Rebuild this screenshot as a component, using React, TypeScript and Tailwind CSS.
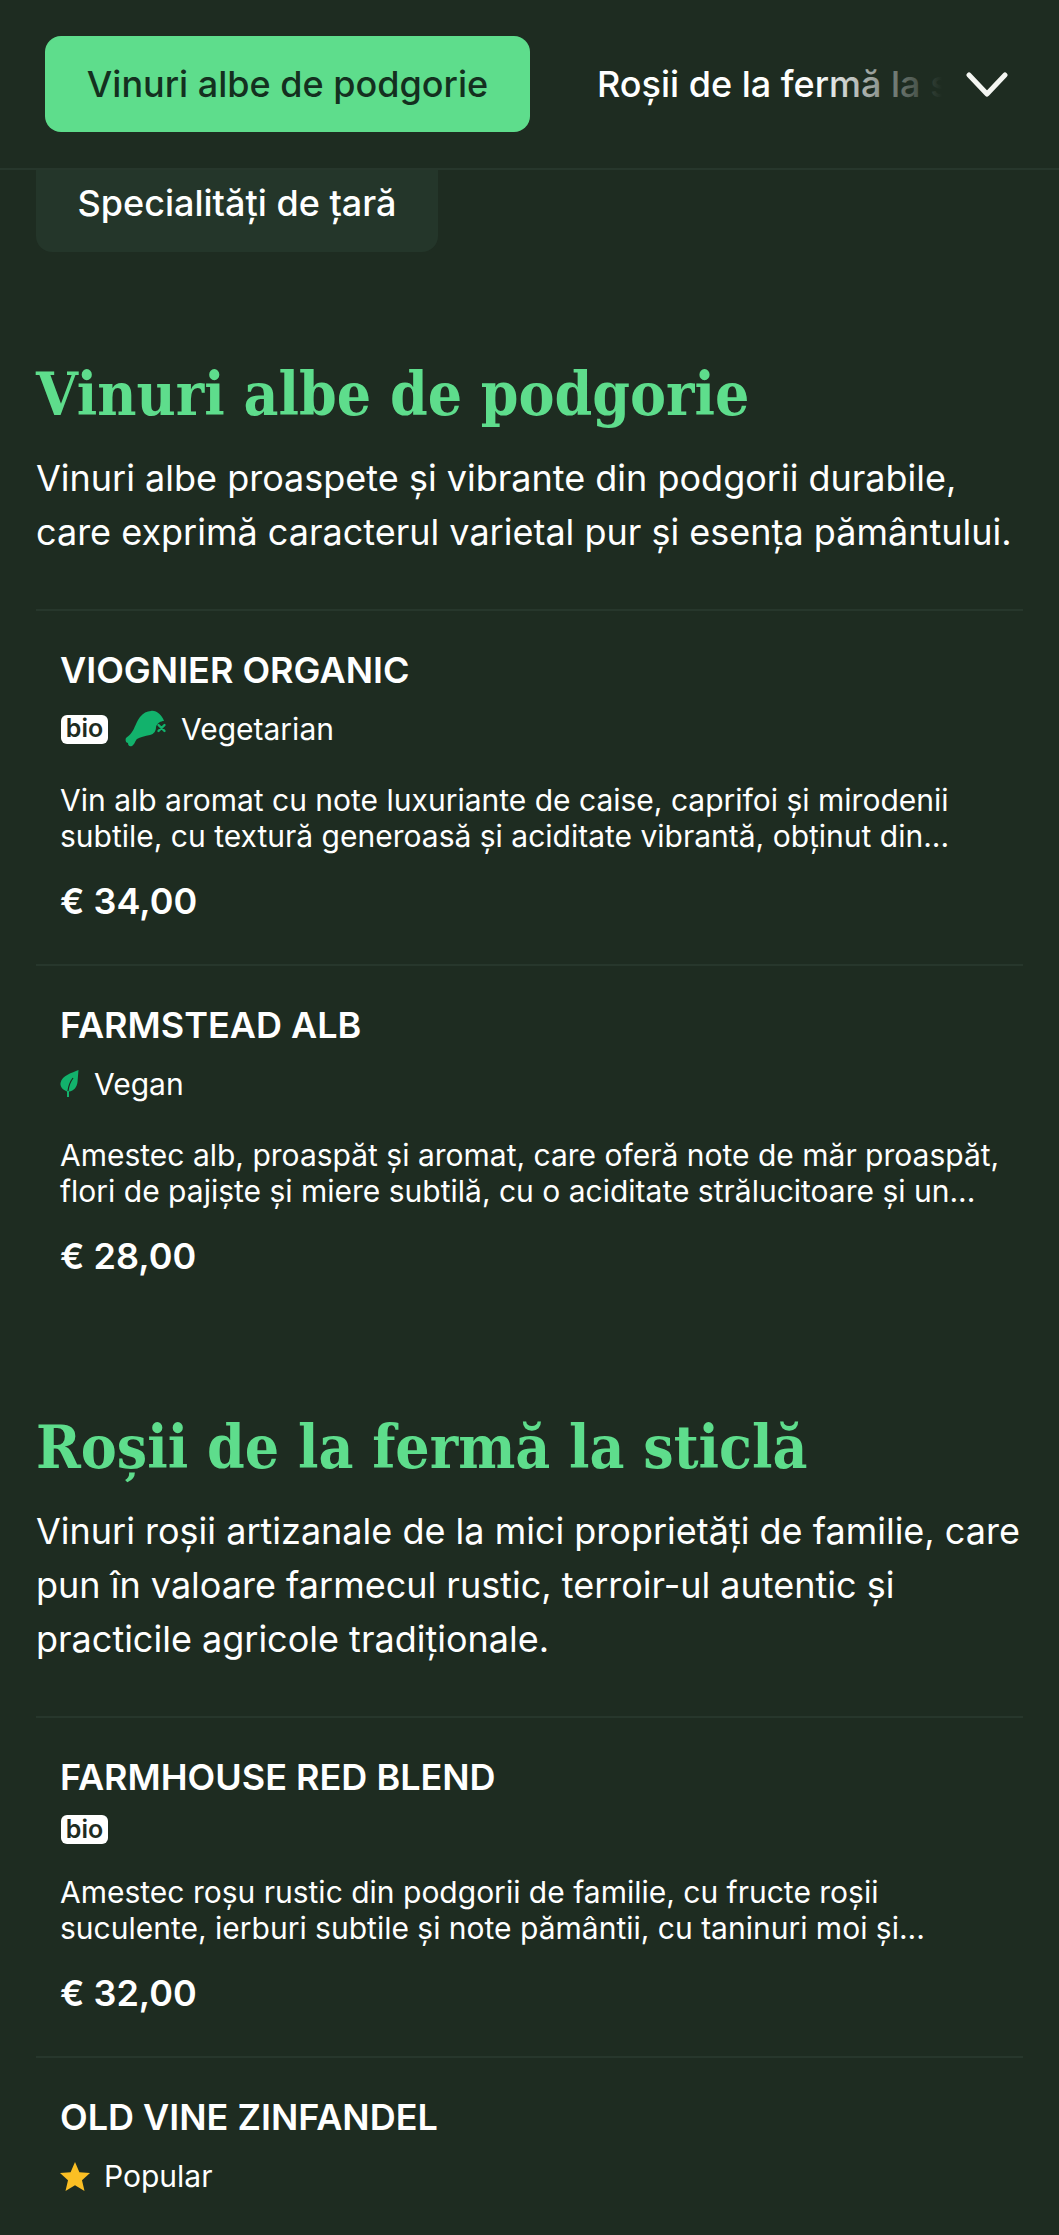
import React from 'react';

type Tag = 'vegetarian' | 'vegan' | 'popular';

interface Dish {
  name: string;
  bio?: boolean;
  tag?: Tag;
  lines: string[];
  price?: string;
}

interface Section {
  title: string;
  intro: string[];
  dishes: Dish[];
}

const SECTIONS: Section[] = [
  {
    title: 'Vinuri albe de podgorie',
    intro: [
      'Vinuri albe proaspete și vibrante din podgorii durabile,',
      'care exprimă caracterul varietal pur și esența pământului.',
    ],
    dishes: [
      {
        name: 'VIOGNIER ORGANIC',
        bio: true,
        tag: 'vegetarian',
        lines: [
          'Vin alb aromat cu note luxuriante de caise, caprifoi și mirodenii',
          'subtile, cu textură generoasă și aciditate vibrantă, obținut din...',
        ],
        price: '€ 34,00',
      },
      {
        name: 'FARMSTEAD ALB',
        tag: 'vegan',
        lines: [
          'Amestec alb, proaspăt și aromat, care oferă note de măr proaspăt,',
          'flori de pajiște și miere subtilă, cu o aciditate strălucitoare și un...',
        ],
        price: '€ 28,00',
      },
    ],
  },
  {
    title: 'Roșii de la fermă la sticlă',
    intro: [
      'Vinuri roșii artizanale de la mici proprietăți de familie, care',
      'pun în valoare farmecul rustic, terroir-ul autentic și',
      'practicile agricole tradiționale.',
    ],
    dishes: [
      {
        name: 'FARMHOUSE RED BLEND',
        bio: true,
        lines: [
          'Amestec roșu rustic din podgorii de familie, cu fructe roșii',
          'suculente, ierburi subtile și note pământii, cu taninuri moi și...',
        ],
        price: '€ 32,00',
      },
      {
        name: 'OLD VINE ZINFANDEL',
        tag: 'popular',
        lines: [],
      },
    ],
  },
];

const DrumstickIcon = () => (
  <svg width="42" height="38" viewBox="0 0 42 38" className="shrink-0">
    <path
      d="M26 1C31 0 37 5 39 11 36 11 32 13 31 17 31 21 29 24 25 25 20 26 15 27 12 29 10 31 10 34 7 36 4 37 3 35 3 33 1 33 0 30 1 28 3 26 5 25 7 22 10 18 11 12 15 7 18 3 22 1 26 1z"
      fill="#12b26c"
    />
    <path d="M33.500 15l6 6M39.500 15l-6 6" stroke="#12b26c" strokeWidth="2.400" strokeLinecap="round" />
  </svg>
);

const LeafIcon = () => (
  <svg width="20" height="29" viewBox="0 0 20 29" className="shrink-0">
    <path d="M18.500 0C12 3 2 5 .5 13 0 17 3 20 7 21.500L7 27 9 27 9 21.500C14 21 17 17 17.500 12 18 8 18 4 18.500 0z" fill="#12b26c" />
    <path d="M8 21C8.500 16 10 12 13 8" fill="none" stroke="#1e2c21" strokeWidth="1.200" />
  </svg>
);

const StarIcon = () => (
  <svg width="30" height="29" viewBox="0 0 30 29" className="shrink-0">
    <path d="M15 0l4.400 10.300 10.600.8-8 7.100 2.500 10.800L15 23.300 5.500 29 8 18.200 0 11.100l10.600-.8z" fill="#fbbf24" />
  </svg>
);

const TAG_LABEL: Record<Tag, string> = { vegetarian: 'Vegetarian', vegan: 'Vegan', popular: 'Popular' };

const DishRow = ({ dish }: { dish: Dish }) => (
  <div className="border-t-2 border-[#27372c] px-[24px] pt-[39px] pb-[41px]">
    <h3 className="text-[36px] leading-[40px] font-semibold text-white">{dish.name}</h3>
    <div className="mt-[18px] flex items-center">
      {dish.bio && (
        <span className="mr-[17px] ml-[1px] flex h-[29px] w-[47px] items-center justify-center rounded-[6px] bg-white text-[25px] font-semibold text-[#1e2c21]">
          bio
        </span>
      )}
      {dish.tag && (
        <span className="flex h-[42px] items-center text-[30px] text-white">
          {dish.tag === 'vegetarian' && <DrumstickIcon />}
          {dish.tag === 'vegan' && <LeafIcon />}
          {dish.tag === 'popular' && <StarIcon />}
          <span className="ml-[14px]">{TAG_LABEL[dish.tag]}</span>
        </span>
      )}
    </div>
    {dish.lines.length > 0 && (
      <p className={`${dish.tag ? 'mt-[32px]' : 'mt-[30px]'} text-[30px] leading-[36px] whitespace-nowrap text-white`}>
        {dish.lines.map((l) => (
          <span key={l} className="block">{l}</span>
        ))}
      </p>
    )}
    {dish.price && <p className="mt-[25px] text-[36px] leading-[44px] font-semibold text-white">{dish.price}</p>}
  </div>
);

export default function App() {
  return (
    <div className="h-[2235px] overflow-hidden bg-[#1e2c21] font-['Inter',sans-serif]">
      <header className="relative z-10 flex h-[170px] items-start border-b-2 border-[#27372c] bg-[#1e2c21] pt-[36px] pl-[45px]">
        <div className="flex h-[96px] w-[485px] items-center justify-center rounded-[16px] bg-[#5edd8c] text-[36px] font-medium text-[#14301f]">
          Vinuri albe de podgorie
        </div>
        <div className="relative ml-[67px] flex h-[96px] w-[345px] items-center overflow-hidden text-[36px] font-medium whitespace-nowrap text-white">
          Roșii de la fermă la sticlă
          <div className="absolute inset-y-0 right-0 w-[125px] bg-gradient-to-r from-transparent to-[#1e2c21]" />
        </div>
        <svg width="42" height="28" viewBox="0 0 42 28" className="mt-[34px] ml-[24px]">
          <path d="M3 5l18 19L39 5" fill="none" stroke="#f4f6f2" strokeWidth="5" strokeLinecap="round" strokeLinejoin="round" />
        </svg>
      </header>

      <div className="px-[36px]">
        <div className="-mt-[2px] flex h-[84px] w-[402px] items-center justify-center rounded-b-[16px] bg-[#24362a] pb-[14px] text-[36px] font-medium text-white">
          Specialități de țară
        </div>

        <div className="mt-[101px] flex flex-col gap-[87px]">
          {SECTIONS.map((s) => (
            <section key={s.title}>
              <h2 className="font-['DejaVu_Serif_Condensed','DejaVu_Serif',serif] pt-[2px] text-[60px] leading-[78px] font-bold whitespace-nowrap text-[#5edd8c]">
                {s.title}
              </h2>
              <p className="mt-[18px] text-[36px] leading-[54px] whitespace-nowrap text-white">
                {s.intro.map((l) => (
                  <span key={l} className="block">{l}</span>
                ))}
              </p>
              <div className="mt-[50px]">
                {s.dishes.map((d) => (
                  <DishRow key={d.name} dish={d} />
                ))}
              </div>
            </section>
          ))}
        </div>
      </div>
    </div>
  );
}
